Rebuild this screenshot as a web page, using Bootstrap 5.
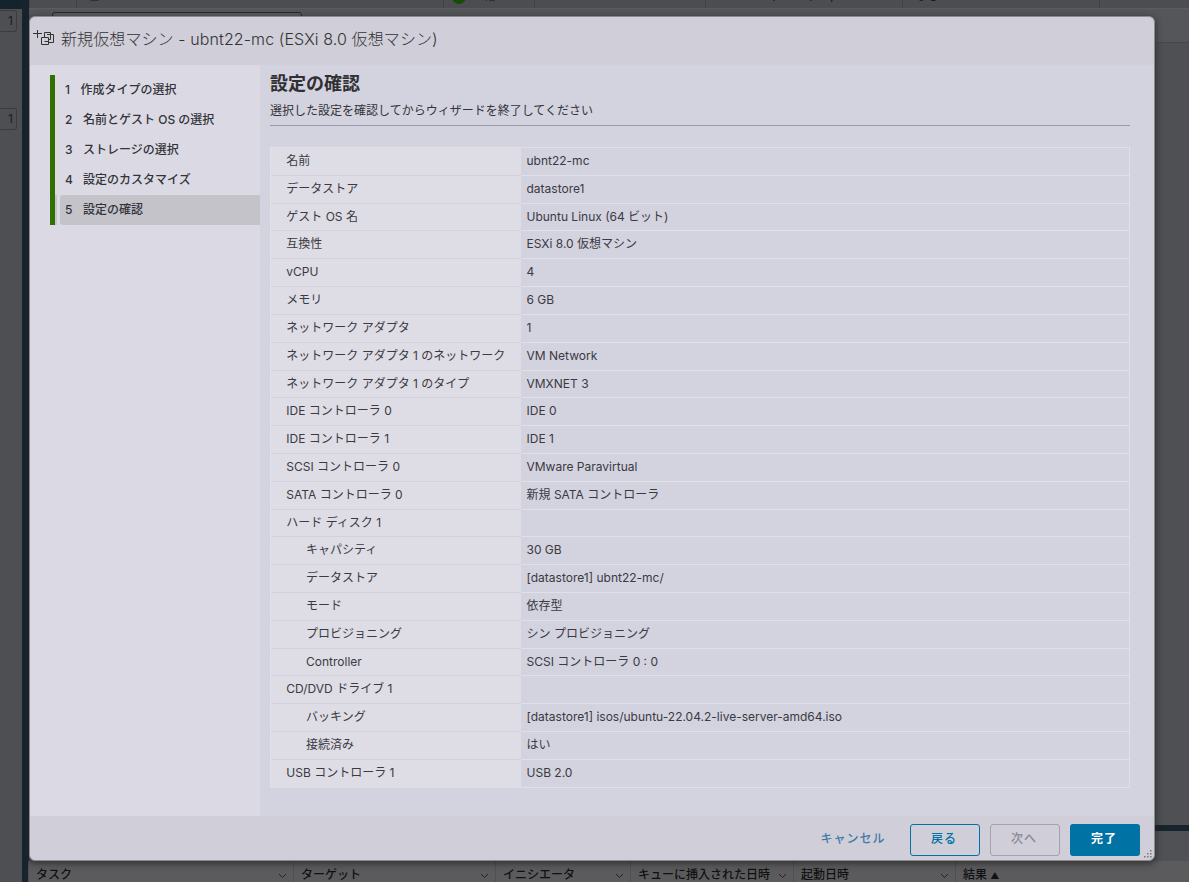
<!DOCTYPE html>
<html lang="ja">
<head>
<meta charset="utf-8">
<title>新規仮想マシン</title>
<link href="https://cdn.jsdelivr.net/npm/bootstrap@5.3.0/dist/css/bootstrap.min.css" rel="stylesheet">
<style>
:root{--ui:"Inter","Noto Sans CJK JP",sans-serif}
body{font:12px/16px var(--ui);color:#333338;background:#4f5053;width:1189px;height:882px;overflow:hidden;position:relative}
.side{width:22px;background:#4e4f52;height:882px}
.side .cap{height:9px;background:#15242c}
.tally{width:17px;height:22px;border:1px solid #3b3c3f;border-left:0;border-radius:0 3px 3px 0;font-size:12px;line-height:20px;color:#1c1c1e;text-align:right;padding-right:3px}
.rail{width:7px;background:#17242d}
.gridline{height:9px;border-bottom:1px solid #5b5c5f;background:#4c4d50;overflow:hidden}
.gridline>div{border-left:1px solid #414245;flex:none;height:8px;position:relative}
.gridline span{position:absolute;bottom:5px;line-height:14px;color:#151517;white-space:nowrap}
.filterbox{height:20px;width:250px;margin:3px 0 0 23px;border:1px solid #252628;border-radius:3px;background:#5b5c5f}
.under{background:#555659;height:33px}
.tasks{height:57px;border-top:6px solid #17242d;background:#505154}
.taskrow{height:21px;background:#5b5b5d}
.taskrow>div{flex:none;border-left:1px solid #505053;padding:6px 6px 0 7px;height:24px;font-weight:500;color:#111;white-space:nowrap}
.taskrow small{font-size:9px}
.wizard{position:absolute;left:29px;top:16px;width:1126px;height:845px;border:1px solid #8a8b8b;border-radius:6px;background:#cfced9;box-shadow:0 2px 6px 1px #222a;overflow:hidden}
.wiz-head{height:48px;padding:12px 0 0 3px}
.wiz-head svg{margin-top:1px}
.wiz-head h1{font:300 16px/20px var(--ui);margin:0;color:#333;letter-spacing:.1px}
.wiz-mid{height:751px}
.steps{width:230px;background:#dbdae4;padding:10px 0 0 20px}
.steps li{height:30px;border-left:5px solid #2f7000;padding-left:5px;line-height:30px;font-weight:500}
.steps li>div{padding-left:5px;border-radius:3px 0 0 3px}
.steps .on{background:linear-gradient(90deg,#c6c5ce 2px,transparent 2px)}
.steps .on>div{background:#c4c3ca}
.steps b{font-weight:500;display:inline-block;width:18px}
.steps li:first-child b{width:15.5px}
.pane{background:#d3d2df;padding:8px 24px 0 10px}
.pane h2{font:700 18px/22px var(--ui);margin:0;color:#303033}
.pane p{margin:10px 0 21px;height:21px;border-bottom:1px solid #9b9ba9;line-height:12px}
.review{border:1px solid #e1e0e9;height:641px;width:860px;color:#3a3a3f}
.pair{height:calc(640px / 23);line-height:25.600px;white-space:nowrap}
.pair dt{width:250px;background:#dedde6;border-bottom:1px solid #d1d0dc;padding-left:15.300px;font-weight:inherit}
.pair dd{margin:0;border-bottom:1px solid #e1e0e9;padding-left:5.500px}
.pair.sub dt{padding-left:35px}
.pair:last-child>*{border-bottom:0}
.wiz-foot{height:44px;padding:8px 14px 0 0;gap:10px}
.wiz-foot .btn{width:70px;height:32px;border-radius:3px;font:500 12px/16px var(--ui);padding:0 2px 2px 0;letter-spacing:1px}
.wiz-foot .b-link{color:#3f7ba8;border:0;margin-right:11px}
.wiz-foot .b-line,.wiz-foot .b-line:hover{color:#0072a3;border:1px solid #0072a3}
.wiz-foot .b-off{color:#8a8994;border:1px solid #a3a2ad}
.wiz-foot .b-main{color:#fff;background:#0072a3;font-weight:700}
.grip{position:absolute;right:1px;bottom:1px}
</style>
</head>
<body>
<div class="d-flex">
  <aside class="side"><div class="cap"></div><div class="tally mt-0" style="position:relative;top:1px">1</div><div class="tally" style="margin-top:77px">1</div></aside>
  <div class="rail"></div>
  <main class="flex-fill d-flex flex-column" style="height:882px">
    <div class="gridline d-flex">
      <div style="width:47px"></div><div style="width:367px"><span style="left:13px"><svg width="10" height="10" viewBox="0 0 10 10" fill="none" stroke="#151517"><rect x="1" y="1" width="7" height="7"/></svg></span></div>
      <div style="width:91px"><svg class="position-absolute" style="left:8px;top:-10px" width="14" height="14"><circle cx="7" cy="7" r="7" fill="#174c06"/></svg><span style="left:28px">正常</span></div>
      <div style="width:171px"></div><div style="width:197px"><span style="left:65px">(64 ビット)</span></div><div style="width:197px"><span style="left:12px">なし</span></div><div></div>
    </div>
    <div class="under"><div class="filterbox"></div></div>
    <div class="flex-fill" style="border-top:1px solid #46474a"></div>
    <div class="tasks"></div>
  </main>
</div>
<div id="taskbar" class="taskrow d-flex position-absolute" style="left:28px;top:861px;width:1161px"></div>
<section class="wizard">
  <header class="wiz-head d-flex">
    <svg width="24" height="20" viewBox="0 0 24 20" fill="none" stroke="#333" stroke-width="1"><path d="M0 3.500h9M4.500 -1v9M8.500 7.500h7v7h-7zM11.500 7V2.500h6v7H16M14 4.500h6.500v8H16M11.500 11.500h4"/></svg>
    <h1 class="ms-1">新規仮想マシン - ubnt22-mc (ESXi 8.0 仮想マシン)</h1>
  </header>
  <div class="wiz-mid d-flex">
    <ol class="steps list-unstyled m-0">
      <li><div><b>1</b>作成タイプの選択</div></li><li><div><b>2</b>名前とゲスト OS の選択</div></li><li><div><b>3</b>ストレージの選択</div></li><li><div><b>4</b>設定のカスタマイズ</div></li><li class="on"><div><b>5</b>設定の確認</div></li>
    </ol>
    <div class="pane flex-fill">
      <h2>設定の確認</h2>
      <p>選択した設定を確認してからウィザードを終了してください</p>
      <dl class="review m-0" id="review"></dl>
    </div>
  </div>
  <footer class="wiz-foot d-flex justify-content-end">
    <button class="btn b-link">キャンセル</button><button class="btn b-line">戻る</button><button class="btn b-off">次へ</button><button class="btn b-main">完了</button>
  </footer>
  <svg class="grip" width="9" height="9" fill="#77777d"><path d="M6 0h1.500v1.500H6zM6 3h1.500v1.500H6zM6 6h1.500v1.500H6zM3 3h1.500v1.500H3zM3 6h1.500v1.500H3zM0 6h1.500v1.500H0z"/></svg>
</section>
<script>
const rows=[["名前","ubnt22-mc"],["データストア","datastore1"],["ゲスト OS 名","Ubuntu Linux (64 ビット)"],["互換性","ESXi 8.0 仮想マシン"],["vCPU","4"],["メモリ","6 GB"],["ネットワーク アダプタ","1"],["ネットワーク アダプタ 1 のネットワーク","VM Network"],["ネットワーク アダプタ 1 のタイプ","VMXNET 3"],["IDE コントローラ 0","IDE 0"],["IDE コントローラ 1","IDE 1"],["SCSI コントローラ 0","VMware Paravirtual"],["SATA コントローラ 0","新規 SATA コントローラ"],["ハード ディスク 1",""],["キャパシティ","30 GB",1],["データストア","[datastore1] ubnt22-mc/",1],["モード","依存型",1],["プロビジョニング","シン プロビジョニング",1],["Controller","SCSI コントローラ 0 : 0",1],["CD/DVD ドライブ 1",""],["バッキング","[datastore1] isos/ubuntu-22.04.2-live-server-amd64.iso",1],["接続済み","はい",1],["USB コントローラ 1","USB 2.0"]];
document.getElementById("review").innerHTML=rows.map(r=>`<div class="pair d-flex${r[2]?" sub":""}"><dt>${r[0]}</dt><dd class="flex-fill">${r[1]}</dd></div>`).join("");
const cols=[["タスク",265],["ターゲット",202],["イニシエータ",135],["キューに挿入された日時",163],["起動日時",162],["結果 <small>▲</small>",234]];
document.getElementById("taskbar").innerHTML=cols.map((c,i)=>`<div class="d-flex justify-content-between" style="width:${c[1]}px"><span>${c[0]}</span>${i<5?'<svg width="9" height="16" fill="none" stroke="#222"><path d="M1 7l3.500 3.500L8 7"/></svg>':""}</div>`).join("");
</script>
<script src="https://cdn.jsdelivr.net/npm/bootstrap@5.3.0/dist/js/bootstrap.bundle.min.js"></script>
</body>
</html>
